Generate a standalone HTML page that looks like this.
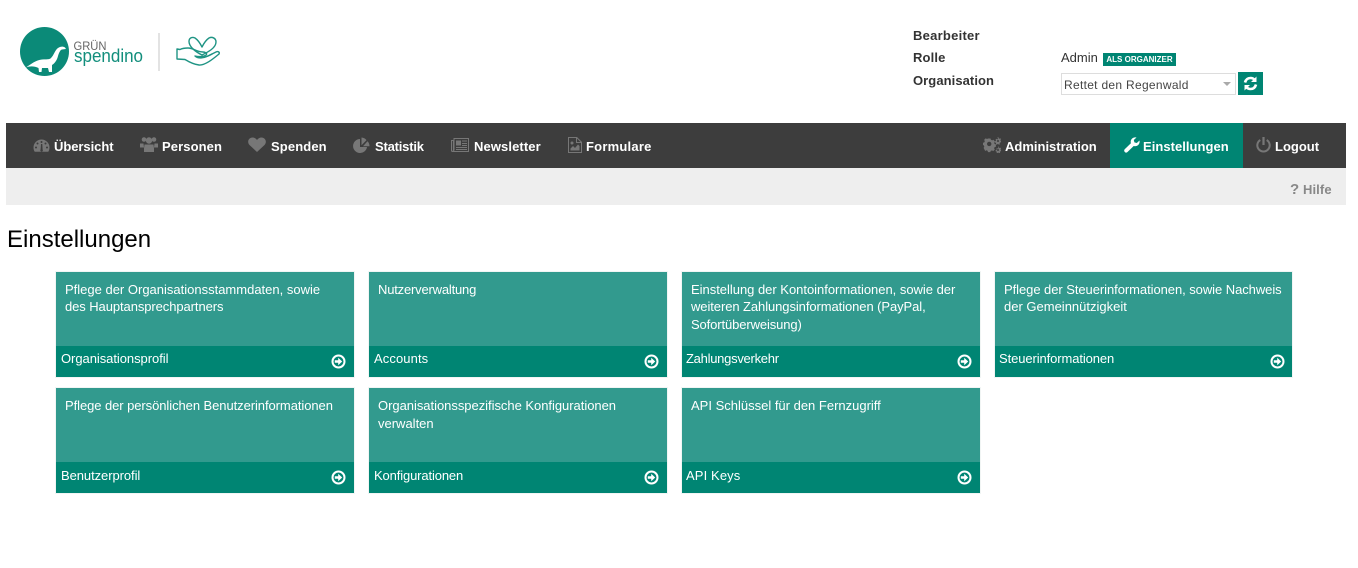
<!DOCTYPE html>
<html lang="de"><head><meta charset="utf-8"><title>Einstellungen</title>
<style>
html,body{margin:0;padding:0;background:#fff;width:1358px;height:568px;overflow:hidden}
body{font-family:"Liberation Sans",Arial,sans-serif;position:relative}
.a{position:absolute;white-space:nowrap}
.lbl{font-weight:bold;font-size:13px;color:#333;line-height:16px;left:913px;letter-spacing:.15px}
.nav{left:6px;top:123px;width:1340px;height:45px;background:#3d3d3d}
.sub{left:6px;top:168px;width:1340px;height:37px;background:#eee}
.nt{font-weight:bold;font-size:13px;color:#fff;line-height:16px;top:139px}
.ic{position:absolute;fill:#777}
.card{position:absolute;width:298px;height:105px;background:#329a8e;box-shadow:0 0 0 1px #f1f5f4}
.card .d{position:absolute;left:9px;top:9px;font-size:13px;line-height:17.4px;color:#fff;white-space:nowrap}
.r2 .d{line-height:18px}
.card .f{position:absolute;left:0;top:74px;width:100%;height:31px;background:#008573}
.card .t{position:absolute;left:5px;top:5px;font-size:13px;line-height:16px;color:#fff;white-space:nowrap}
.r2 .t{top:6px}
.card svg{position:absolute;left:274.500px;top:81.500px}
</style></head><body>

<svg class="a" style="left:0;top:10px" width="250" height="90" viewBox="0 0 250 90">
<circle cx="44.500" cy="41.500" r="24.500" fill="#0b8a78"/>
<path d="M26 57.500C31 54 36 50 42 49.500C46 49 49 50 51 48C54 45 55 40 58 38C60 36.500 63 36 65 37.500L66 39L62 39.500C60 40 59 43 58 46C57 50 55 53 52 55L52 62L49 62L48 58L42 58L41.500 62L39 62L38.500 58C34 56 30 56 26 57.500z" fill="#fff"/>
<text x="73.500" y="40" font-family="Liberation Sans,sans-serif" font-size="12" fill="#666" textLength="33" lengthAdjust="spacingAndGlyphs">GRÜN</text>
<text x="74" y="52" font-family="Liberation Sans,sans-serif" font-size="18.500" fill="#128e7c" textLength="69" lengthAdjust="spacingAndGlyphs">spendino</text>
<rect x="158" y="23" width="2" height="38" fill="#e3e3e3"/>
<g fill="none" stroke="#1f9484" stroke-width="1.400" stroke-linejoin="round" stroke-linecap="round">
<path d="M202 45C196 42 189 37 189 31.500C189 28 192 26.500 195 28C198 30 200.500 34 202 37C203.500 34 206 30 209 28C212 26.500 216 28 216 32C216 38 208 42 202 45z"/>
<path d="M177 39v10l8 .500c5 3 9 5 14 5.500c6 .500 14-6 20-11c1-2-1-3-3-2l-8 4c-4 2-10 3-13 0c4 1 9 .500 11-1s-1-3-3-3c-7 0-9-4-15-4c-3 0-6 .500-8 1.500z"/>
<path d="M197 47c5 1 10 0 15-3"/>
</g>
</svg>

<div class="a lbl" style="top:28px;letter-spacing:.25px">Bearbeiter</div>
<div class="a lbl" style="top:50px">Rolle</div>
<div class="a lbl" style="top:73px;letter-spacing:.07px">Organisation</div>
<div class="a" style="left:1061px;top:50px;font-size:13px;line-height:16px;color:#333">Admin</div>
<div class="a" style="left:1103px;top:53px;width:73px;height:13px;background:#008573;color:#fff;font-size:8px;font-weight:bold;line-height:13px;text-align:center">ALS ORGANIZER</div>
<div class="a" style="left:1061px;top:73px;width:173px;height:20px;border:1px solid #ddd;background:#fff;font-size:12px;line-height:22px;color:#444;text-indent:2px;letter-spacing:.3px">Rettet den Regenwald</div>
<div class="a" style="left:1223px;top:82px;width:0;height:0;border:4px solid transparent;border-top:4px solid #aaa;border-bottom:0"></div>
<div class="a" style="left:1238px;top:72px;width:25px;height:23px;background:#008573"></div>
<svg class="a" style="left:1242px;top:75px" width="17" height="17" viewBox="0 0 17 17" fill="none" stroke="#fff" stroke-width="2.600">
<path d="M3 7.500C3.800 4.500 6 3 8.500 3c2 0 3.500 1 4.500 2.200"/><path d="M14.500 1.500v5.500H9z" fill="#fff" stroke="none"/>
<path d="M14 9.500c-.8 3-3 4.500-5.500 4.500-2 0-3.500-1-4.500-2.200"/><path d="M2.500 15.500V10H8z" fill="#fff" stroke="none"/>
</svg>

<div class="a nav"></div>
<div class="a" style="left:1110px;top:123px;width:133px;height:45px;background:#008573"></div>
<div class="a sub"></div>

<svg class="ic" style="left:33px;top:138px" width="17" height="15" viewBox="0 0 17 15"><path d="M8.500 1.500a8 8 0 0 0-8 8c0 1.500.4 3 1.200 4.200h13.600c.8-1.200 1.200-2.700 1.200-4.200a8 8 0 0 0-8-8z"/><g fill="#3d3d3d"><circle cx="8.500" cy="4" r="1"/><circle cx="4.500" cy="5.500" r="1"/><circle cx="12.500" cy="5.500" r="1"/><circle cx="3" cy="9.500" r="1"/><circle cx="14" cy="9.500" r="1"/><path d="M8 6l1.300 0 .3 5.500a1.300 1.300 0 1 1-2 0z"/></g></svg>
<div class="a nt" style="left:54px;letter-spacing:-.05px">Übersicht</div>
<svg class="ic" style="left:140px;top:136px" width="18" height="17" viewBox="0 0 18 17"><circle cx="4" cy="3.500" r="2.300"/><circle cx="14" cy="3.500" r="2.300"/><circle cx="9" cy="4.500" r="3.200"/><path d="M0 7.500h3.500l.5 4H0zM18 7.500h-3.500l-.5 4h4zM4.500 8.500h9l.5 4v3.500H4v-3.500z"/></svg>
<div class="a nt" style="left:162px;letter-spacing:.1px">Personen</div>
<svg class="ic" style="left:248px;top:137px" width="18" height="15" viewBox="0 0 18 15"><path d="M9 15L1.500 8C-1.500 4.500 1 .5 4.500.5 6.500.5 8 1.500 9 3c1-1.500 2.500-2.500 4.500-2.500 3.500 0 6 4 3 7.500z"/></svg>
<div class="a nt" style="left:271px;letter-spacing:.12px">Spenden</div>
<svg class="ic" style="left:353px;top:137px" width="17" height="16" viewBox="0 0 17 16"><path d="M7 2a7 7 0 1 0 7 8H7z"/><path d="M8.500.5v7.800l5-5.200C12.200 1.500 10.500.6 8.500.5z"/><path d="M10 9.200h6.500c0-2-.7-3.800-2-5z"/></svg>
<div class="a nt" style="left:375px;letter-spacing:-.2px">Statistik</div>
<svg class="ic" style="left:451px;top:138px" width="18" height="14" viewBox="0 0 18 14"><path fill-rule="evenodd" d="M2.500 0H18v14H1.500A1.500 1.500 0 0 1 0 12.500V2h2.500zM3.500 1v11.500l-1 .5h14.500V1zM1 3v9.500l.5.500.4-.4V3zM5 2.500h5v5H5zM11 2.500h5v1h-5zM11 5h5v1h-5zM11 7h5v1h-5zM5 9h11v1H5zM5 11h11v1H5z"/></svg>
<div class="a nt" style="left:474px;letter-spacing:.1px">Newsletter</div>
<svg class="ic" style="left:568px;top:137px" width="14" height="16" viewBox="0 0 14 16"><path fill-rule="evenodd" d="M0 0h9l5 5v11H0zM1 1v14h12V6H8V1zM9 1.500V5h3.500zM2.500 13.500v-2l2.500-2.500 2 2 3-3.500 1.500 1.500v4.500zM4 4.500a1.500 1.500 0 1 1 0 3 1.500 1.500 0 0 1 0-3z"/></svg>
<div class="a nt" style="left:586px;letter-spacing:.22px">Formulare</div>

<svg class="ic" style="left:983px;top:137px" width="18" height="16" viewBox="0 0 18 16"><path fill-rule="evenodd" d="M5 3.500h2.500l.4 1.300 1.300.6 1.200-.6 1.500 1.700-.7 1.200.4 1.300 1.300.4v2.300l-1.300.4-.5 1.300.7 1.100-1.600 1.600-1.200-.7-1.300.5-.4 1.200H5l-.4-1.300-1.300-.5-1.100.7L.6 12.900l.7-1.200-.5-1.300L0 10V7.800l1.300-.4.500-1.300-.7-1.200 1.700-1.600 1.100.7 1.200-.5zM6.200 6.700a2.200 2.200 0 1 0 0 4.400 2.200 2.200 0 0 0 0-4.400z" transform="translate(0 -2)"/><path fill-rule="evenodd" d="M14.500 0l1 .3.100 1 .9.500.8-.5.700.8-.5.800v.9l.5.500v1l-.9.200-.5.800.3.900-.9.500-.7-.6h-1l-.6.700-.9-.5.300-.9-.5-.8-.9-.2v-1l.9-.3.400-.8-.4-.9.800-.6.700.6.900-.3zM15 3a1 1 0 1 0 0 2 1 1 0 0 0 0-2zM15 9.500l.9.300.1.800.8.400.7-.4.500.7-.4.700v.8l.5.500v.9l-.8.100-.4.700.3.800-.8.500-.6-.6h-.9l-.5.600-.8-.4.200-.8-.4-.7-.8-.2v-.9l.8-.3.400-.7-.4-.7.700-.5.600.5.800-.3zM15 12a1 1 0 1 0 0 2 1 1 0 0 0 0-2z"/></svg>
<div class="a nt" style="left:1005px">Administration</div>
<svg class="a" style="left:1124px;top:137px" width="16" height="16" viewBox="0 0 16 16" fill="#fff"><path d="M15.500 3.500c.4 2-.3 4-2 5-1.300.8-2.700.9-3.800.5L3.500 15c-.8.800-2 .8-2.700 0l-.1-.1c-.7-.7-.7-1.900 0-2.600L6.900 6.200c-.4-1.200-.3-2.600.5-3.800C8.500.8 10.500 0 12.500.5L9.800 3l.6 2.400 2.400.6z"/></svg>
<div class="a nt" style="left:1143px;letter-spacing:.04px">Einstellungen</div>
<svg class="ic" style="left:1256px;top:137px" width="15" height="16" viewBox="0 0 15 16"><path fill="none" stroke="#777" stroke-width="2" d="M4.300 3A6.200 6.200 0 1 0 10.700 3"/><rect x="6.400" y="0" width="2.200" height="8"/></svg>
<div class="a nt" style="left:1275px">Logout</div>

<div class="a" style="left:1290px;top:182px;font-size:13px;font-weight:bold;line-height:16px;color:#888;letter-spacing:.1px"><span style="font-size:15px">?</span> Hilfe</div>
<div class="a" style="left:7px;top:226px;font-size:24px;line-height:28px;color:#000">Einstellungen</div>

<div class="card" style="left:56px;top:272px"><div class="d">Pflege der Organisationsstammdaten, sowie<br><span style="letter-spacing:-.08px">des Hauptansprechpartners</span></div><div class="f"><div class="t" style="letter-spacing:-.05px">Organisationsprofil</div></div><svg width="15" height="15" viewBox="0 0 15 15"><circle cx="7.500" cy="7.500" r="6" fill="none" stroke="#fff" stroke-width="2"/><path d="M3.800 6.300h3.400V3.800l4 3.700-4 3.700V8.700H3.800z" fill="#fff"/></svg></div>
<div class="card" style="left:369px;top:272px"><div class="d" style="letter-spacing:-.19px">Nutzerverwaltung</div><div class="f"><div class="t" style="letter-spacing:.1px">Accounts</div></div><svg width="15" height="15" viewBox="0 0 15 15"><circle cx="7.500" cy="7.500" r="6" fill="none" stroke="#fff" stroke-width="2"/><path d="M3.800 6.300h3.400V3.800l4 3.700-4 3.700V8.700H3.800z" fill="#fff"/></svg></div>
<div class="card" style="left:682px;top:272px"><div class="d"><span style="letter-spacing:-.02px">Einstellung der Kontoinformationen, sowie der</span><br><span style="letter-spacing:-.08px">weiteren Zahlungsinformationen (PayPal,</span><br><span style="letter-spacing:-.11px">Sofortüberweisung)</span></div><div class="f"><div class="t" style="left:4px;letter-spacing:-.27px">Zahlungsverkehr</div></div><svg width="15" height="15" viewBox="0 0 15 15"><circle cx="7.500" cy="7.500" r="6" fill="none" stroke="#fff" stroke-width="2"/><path d="M3.800 6.300h3.400V3.800l4 3.700-4 3.700V8.700H3.800z" fill="#fff"/></svg></div>
<div class="card" style="left:995px;top:272px;width:297px"><div class="d"><span style="letter-spacing:-.06px">Pflege der Steuerinformationen, sowie Nachweis</span><br>der Gemeinnützigkeit</div><div class="f"><div class="t" style="left:4px;letter-spacing:-.1px">Steuerinformationen</div></div><svg width="15" height="15" viewBox="0 0 15 15"><circle cx="7.500" cy="7.500" r="6" fill="none" stroke="#fff" stroke-width="2"/><path d="M3.800 6.300h3.400V3.800l4 3.700-4 3.700V8.700H3.800z" fill="#fff"/></svg></div>
<div class="card r2" style="left:56px;top:388px"><div class="d" style="letter-spacing:-.07px">Pflege der persönlichen Benutzerinformationen</div><div class="f"><div class="t" style="letter-spacing:-.07px">Benutzerprofil</div></div><svg width="15" height="15" viewBox="0 0 15 15"><circle cx="7.500" cy="7.500" r="6" fill="none" stroke="#fff" stroke-width="2"/><path d="M3.800 6.300h3.400V3.800l4 3.700-4 3.700V8.700H3.800z" fill="#fff"/></svg></div>
<div class="card r2" style="left:369px;top:388px"><div class="d"><span style="letter-spacing:-.03px">Organisationsspezifische Konfigurationen</span><br>verwalten</div><div class="f"><div class="t" style="letter-spacing:-.13px">Konfigurationen</div></div><svg width="15" height="15" viewBox="0 0 15 15"><circle cx="7.500" cy="7.500" r="6" fill="none" stroke="#fff" stroke-width="2"/><path d="M3.800 6.300h3.400V3.800l4 3.700-4 3.700V8.700H3.800z" fill="#fff"/></svg></div>
<div class="card r2" style="left:682px;top:388px"><div class="d">API Schlüssel für den Fernzugriff</div><div class="f"><div class="t" style="left:4px;letter-spacing:.12px">API Keys</div></div><svg width="15" height="15" viewBox="0 0 15 15"><circle cx="7.500" cy="7.500" r="6" fill="none" stroke="#fff" stroke-width="2"/><path d="M3.800 6.300h3.400V3.800l4 3.700-4 3.700V8.700H3.800z" fill="#fff"/></svg></div>
</body></html>
